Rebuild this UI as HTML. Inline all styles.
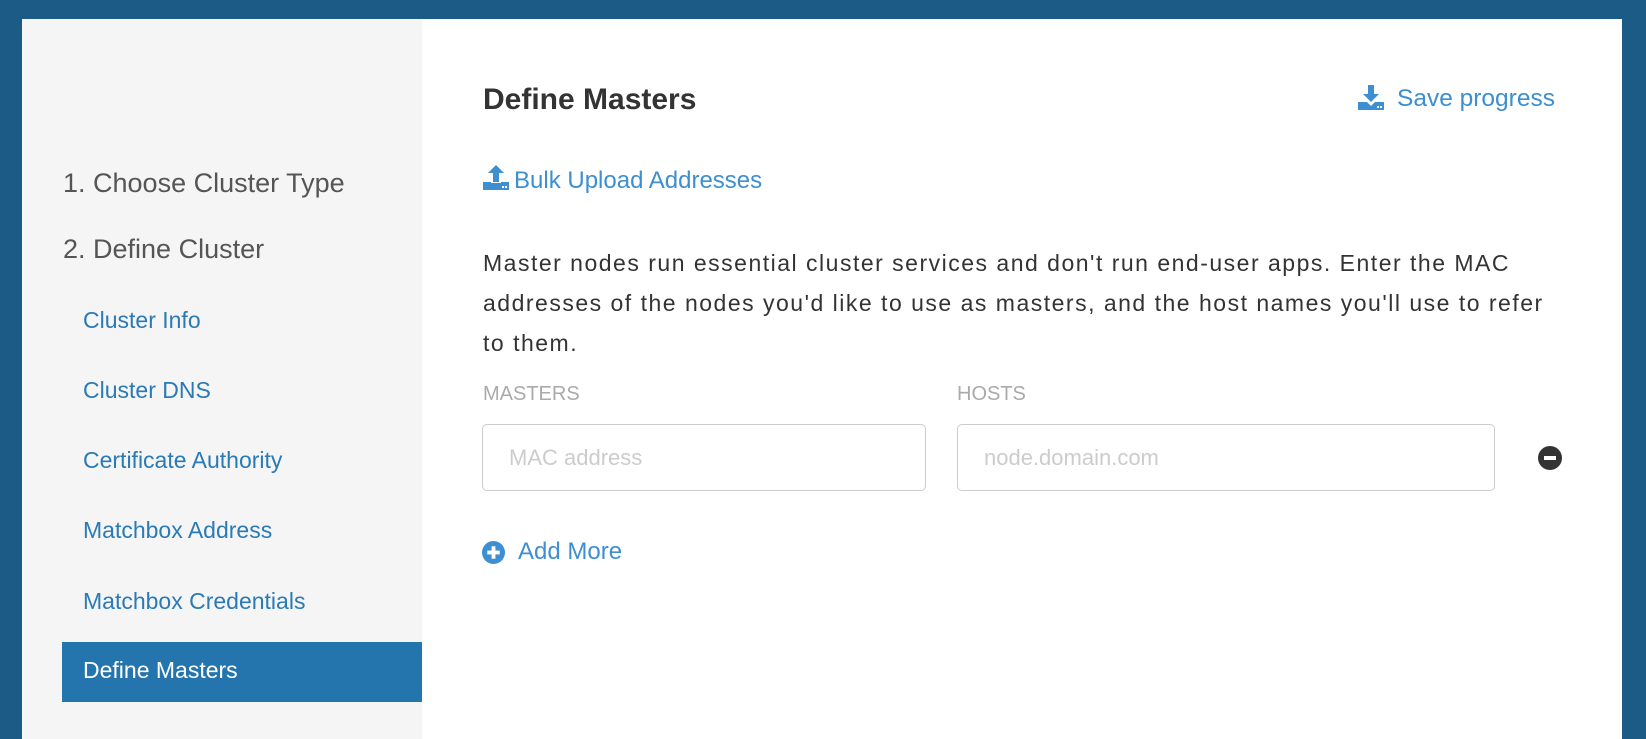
<!DOCTYPE html>
<html><head><meta charset="utf-8"><style>
*{margin:0;padding:0;box-sizing:border-box}
body{width:1646px;height:726px;overflow:hidden;background:#1c5b86;font-family:"Liberation Sans",sans-serif;position:relative}
.panel{position:absolute;left:22px;top:19px;width:1600px;height:720px;background:#fff}
.side{position:absolute;left:0;top:0;width:400px;height:720px;background:#f5f5f5}
.t{position:absolute;white-space:nowrap}
.step{font-size:27px;color:#555;left:41px}
.sub{font-size:23px;color:#2a7ab5;left:61px}
.active{position:absolute;left:40px;top:623px;width:360px;height:60px;background:#2475ad}
.link{color:#3d8fd1}
.inp{position:absolute;border:1.5px solid #ccc;border-radius:5px;height:67px;top:405px}
.ph{position:absolute;font-size:22px;color:#ccc;top:20px;left:26px}
</style></head><body>
<div class="panel">
<div class="side">
<div class="t step" style="top:149px">1. Choose Cluster Type</div>
<div class="t step" style="top:215px">2. Define Cluster</div>
<div class="t sub" style="top:288px">Cluster Info</div>
<div class="t sub" style="top:358px">Cluster DNS</div>
<div class="t sub" style="top:428px">Certificate Authority</div>
<div class="t sub" style="top:498px">Matchbox Address</div>
<div class="t sub" style="top:569px">Matchbox Credentials</div>
<div class="active"></div>
<div class="t sub" style="top:638px;color:#fff">Define Masters</div>
</div>
<div class="t" style="left:461px;top:64px;font-size:30px;font-weight:bold;color:#333">Define Masters</div>
<svg style="position:absolute;left:1336px;top:66px" width="26" height="26" viewBox="0 0 26 26"><path d="M10 0h6v9h5l-8 8-8-8h5z" fill="#3d8fd1"/><path d="M0 17h9l4 4 4-4h9v8H0z" fill="#3d8fd1"/><rect x="19" y="21" width="2" height="2" fill="#fff"/><rect x="22" y="21" width="2" height="2" fill="#fff"/></svg>
<div class="t link" style="left:1375px;top:66px;font-size:24.5px">Save progress</div>
<svg style="position:absolute;left:461px;top:146px" width="26" height="26" viewBox="0 0 26 26"><path d="M13 0l8 8h-5v9h-6V8H5z" fill="#3d8fd1"/><path d="M0 17h8v1h10v-1h8v8H0z" fill="#3d8fd1"/><rect x="19" y="21" width="2" height="2" fill="#fff"/><rect x="22" y="21" width="2" height="2" fill="#fff"/></svg>
<div class="t link" style="left:492px;top:148px;font-size:24px">Bulk Upload Addresses</div>
<div style="position:absolute;left:461px;top:224px;width:1120px;font-size:23px;letter-spacing:1.5px;line-height:40px;color:#333;white-space:nowrap">Master nodes run essential cluster services and don't run end-user apps. Enter the MAC<br>addresses of the nodes you'd like to use as masters, and the host names you'll use to refer<br>to them.</div>
<div class="t" style="left:461px;top:364px;font-size:20px;color:#aaa">MASTERS</div>
<div class="t" style="left:935px;top:364px;font-size:20px;color:#aaa">HOSTS</div>
<div class="inp" style="left:460px;width:444px"><span class="ph">MAC address</span></div>
<div class="inp" style="left:935px;width:538px"><span class="ph">node.domain.com</span></div>
<svg style="position:absolute;left:1516px;top:427px" width="24" height="24" viewBox="0 0 24 24"><circle cx="12" cy="12" r="12" fill="#333"/><rect x="6" y="10" width="12" height="4" fill="#fff"/></svg>
<svg style="position:absolute;left:460px;top:522px" width="23" height="23" viewBox="0 0 24 24"><circle cx="12" cy="12" r="12" fill="#3d8fd1"/><rect x="5.5" y="10" width="13" height="4" fill="#fff"/><rect x="10" y="5.5" width="4" height="13" fill="#fff"/></svg>
<div class="t link" style="left:496px;top:519px;font-size:24px">Add More</div>
</div>
</body></html>
